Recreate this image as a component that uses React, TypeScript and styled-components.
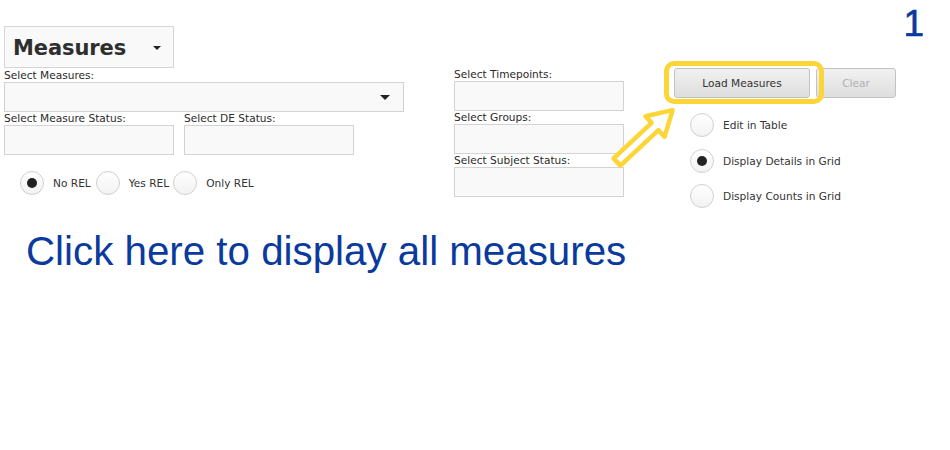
import React from 'react';
import styled, { createGlobalStyle } from 'styled-components';

const GlobalStyle = createGlobalStyle`
  body {
    margin: 0;
    background: #fff;
    font-family: "DejaVu Sans", "Liberation Sans", sans-serif;
    font-size: 10.6px;
    color: #333;
  }
`;

const Page = styled.div`
  position: relative;
  width: 950px;
  height: 450px;
  padding: 26px 0 0 4px;
  box-sizing: border-box;
`;

const Top = styled.div`
  display: flex;
  align-items: flex-start;
`;

const LeftCol = styled.div`
  width: 400px;
  display: flex;
  flex-direction: column;
`;

const MidCol = styled.div`
  margin-left: 50px;
  padding-top: 42px;
  width: 170px;
  display: flex;
  flex-direction: column;
`;

const RightCol = styled.div`
  position: relative;
  margin-left: 40px;
  padding-top: 42px;
  display: flex;
  flex-direction: column;
`;

const TitleSelect = styled.div`
  width: 170px;
  height: 42px;
  box-sizing: border-box;
  border: 1px solid #d6d6d6;
  background: #f9f9f9;
  display: flex;
  align-items: center;
  justify-content: space-between;
  padding: 2px 12px 0 8px;
  font-size: 21px;
  letter-spacing: -0.1px;
  font-weight: bold;
  color: #2e2e2e;
`;

const Caret = styled.span<{ $size?: number }>`
  width: 0;
  height: 0;
  border-left: ${p => p.$size ?? 4}px solid transparent;
  border-right: ${p => p.$size ?? 4}px solid transparent;
  border-top: ${p => p.$size ?? 4}px solid #222;
`;

const Label = styled.div`
  height: 13px;
  line-height: 13px;
  white-space: nowrap;
  color: #2a2a2a;
`;

const Box = styled.div<{ $w?: number }>`
  width: ${p => p.$w ?? 170}px;
  height: 30px;
  box-sizing: border-box;
  border: 1px solid #d3d3d3;
  background: #f9f9f9;
  display: flex;
  align-items: center;
  justify-content: flex-end;
  padding-right: 13px;
`;

const FieldRow = styled.div`
  display: flex;
  gap: 10px;
`;

const Field = styled.div`
  display: flex;
  flex-direction: column;
`;

const RadioRow = styled.div`
  display: flex;
  align-items: center;
  margin: 16px 0 0 16px;
`;

const RadioItem = styled.label<{ $gap?: number }>`
  display: flex;
  align-items: center;
  gap: 9px;
  margin-right: ${p => p.$gap ?? 0}px;
  color: #333;
`;

const Circle = styled.span<{ $on?: boolean }>`
  width: 24px;
  height: 24px;
  box-sizing: border-box;
  border-radius: 50%;
  border: 1px solid #d0d0d0;
  background: linear-gradient(#fff, #f2f2f2);
  display: flex;
  align-items: center;
  justify-content: center;
  &::after {
    content: '';
    display: ${p => (p.$on ? 'block' : 'none')};
    width: 10px;
    height: 10px;
    border-radius: 50%;
    background: #222;
  }
`;

const Buttons = styled.div`
  display: flex;
  gap: 6px;
  margin-left: 10px;
`;

const Button = styled.button<{ $w: number; $disabled?: boolean }>`
  width: ${p => p.$w}px;
  height: 30px;
  border: 1px solid #c2c2c2;
  border-radius: 3px;
  background: linear-gradient(#f1f1f1, #dedede);
  font-family: inherit;
  font-size: 10.6px;
  color: ${p => (p.$disabled ? '#b0b0b0' : '#333')};
  padding: 0;
`;

const Options = styled.div`
  display: flex;
  flex-direction: column;
  gap: 11.5px;
  margin: 15px 0 0 26px;
`;

const Highlight = styled.div`
  position: absolute;
  left: 0;
  top: 35px;
  width: 160px;
  height: 43px;
  box-sizing: border-box;
  border: 5px solid #fdd537;
  border-radius: 10px;
`;

const Arrow = styled.svg`
  position: absolute;
  left: 600px;
  top: 100px;
`;

const Step = styled.div`
  position: absolute;
  right: 26px;
  top: 3px;
  font-family: "Liberation Sans", Arial, sans-serif;
  font-size: 37px;
  color: #0a3a9e;
  -webkit-text-stroke: 0.6px #0a3a9e;
`;

const Hint = styled.div`
  margin: 21px 0 0 22px;
  font-family: "Liberation Sans", Arial, sans-serif;
  font-size: 40.3px;
  color: #0a3a9e;
  white-space: nowrap;
`;

export default function App() {
  return (
    <Page>
      <GlobalStyle />
      <Step>1</Step>
      <Top>
        <LeftCol>
          <TitleSelect>
            <span>Measures</span>
            <Caret />
          </TitleSelect>
          <Label style={{ marginTop: 1 }}>Select Measures:</Label>
          <Box $w={400}>
            <Caret $size={5} />
          </Box>
          <FieldRow>
            <Field>
              <Label>Select Measure Status:</Label>
              <Box />
            </Field>
            <Field>
              <Label>Select DE Status:</Label>
              <Box />
            </Field>
          </FieldRow>
          <RadioRow>
            <RadioItem $gap={5}>
              <Circle $on />
              No REL
            </RadioItem>
            <RadioItem $gap={4}>
              <Circle />
              Yes REL
            </RadioItem>
            <RadioItem>
              <Circle />
              Only REL
            </RadioItem>
          </RadioRow>
        </LeftCol>
        <MidCol>
          <Label>Select Timepoints:</Label>
          <Box />
          <Label>Select Groups:</Label>
          <Box />
          <Label>Select Subject Status:</Label>
          <Box />
        </MidCol>
        <RightCol>
          <Buttons>
            <Button $w={136}>Load Measures</Button>
            <Button $w={80} $disabled>
              Clear
            </Button>
          </Buttons>
          <Options>
            <RadioItem>
              <Circle />
              Edit in Table
            </RadioItem>
            <RadioItem>
              <Circle $on />
              Display Details in Grid
            </RadioItem>
            <RadioItem>
              <Circle />
              Display Counts in Grid
            </RadioItem>
          </Options>
          <Highlight />
        </RightCol>
      </Top>
      <Hint>Click here to display all measures</Hint>
      <Arrow width="90" height="75" viewBox="0 0 90 75">
        <polygon
          transform="translate(17 62) rotate(-43)"
          points="0,-5 52,-5 52,-14 76,0 52,14 52,5 0,5"
          fill="#fff"
          stroke="#fdd537"
          strokeWidth="4.5"
          strokeLinejoin="round"
        />
      </Arrow>
    </Page>
  );
}
